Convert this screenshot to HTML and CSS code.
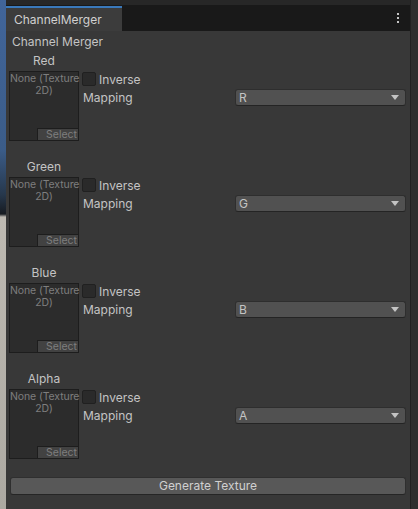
FILE: index.html
```html
<!DOCTYPE html>
<html>
<head>
<meta charset="utf-8">
<link rel="stylesheet" href="styles.css">
</head>
<body>
<div class="app">
  <div class="scene"></div>
  <div class="editor">
    <div class="topstrip"></div>
    <div class="tabbar">
      <div class="tab">ChannelMerger</div>
      <div class="menu">
        <svg width="4" height="12" viewBox="0 0 4 12"><rect x="1" y="1" width="2" height="2" fill="#c4c4c4"/><rect x="1" y="5" width="2" height="2" fill="#c4c4c4"/><rect x="1" y="9" width="2" height="2" fill="#c4c4c4"/></svg>
      </div>
    </div>
    <div class="content">
      <div class="title">Channel Merger</div>

      <div class="section">
        <div class="chan">Red</div>
        <div class="row">
          <div class="texbox">
            <div class="none">None (Texture<br>2D)</div>
            <div class="select">Select</div>
          </div>
          <div class="fields">
            <div class="inv"><span class="check"></span><span>Inverse</span></div>
            <div class="map"><span class="maplabel">Mapping</span><div class="dropdown"><span>R</span><span class="arrow"></span></div></div>
          </div>
        </div>
      </div>

      <div class="section">
        <div class="chan">Green</div>
        <div class="row">
          <div class="texbox">
            <div class="none">None (Texture<br>2D)</div>
            <div class="select">Select</div>
          </div>
          <div class="fields">
            <div class="inv"><span class="check"></span><span>Inverse</span></div>
            <div class="map"><span class="maplabel">Mapping</span><div class="dropdown"><span>G</span><span class="arrow"></span></div></div>
          </div>
        </div>
      </div>

      <div class="section">
        <div class="chan">Blue</div>
        <div class="row">
          <div class="texbox">
            <div class="none">None (Texture<br>2D)</div>
            <div class="select">Select</div>
          </div>
          <div class="fields">
            <div class="inv"><span class="check"></span><span>Inverse</span></div>
            <div class="map"><span class="maplabel">Mapping</span><div class="dropdown"><span>B</span><span class="arrow"></span></div></div>
          </div>
        </div>
      </div>

      <div class="section">
        <div class="chan">Alpha</div>
        <div class="row">
          <div class="texbox">
            <div class="none">None (Texture<br>2D)</div>
            <div class="select">Select</div>
          </div>
          <div class="fields">
            <div class="inv"><span class="check"></span><span>Inverse</span></div>
            <div class="map"><span class="maplabel">Mapping</span><div class="dropdown"><span>A</span><span class="arrow"></span></div></div>
          </div>
        </div>
      </div>

      <div class="generate">Generate Texture</div>
    </div>
  </div>
  <div class="side"></div>
</div>
</body>
</html>
```

FILE: styles.css
```css
html, body {
  margin: 0;
  padding: 0;
  height: 100%;
}
body {
  font-family: Inter, "Noto Sans", "Liberation Sans", sans-serif;
  font-size: 12px;
  color: #c4c4c4;
  background: #383838;
}
.app {
  display: flex;
  height: 509px;
  width: 418px;
}
.scene {
  width: 6px;
  flex: none;
  background: linear-gradient(#41659a 0px, #3b5c88 150px, #26374b 195px, #171b21 214px, #bdb9b1 217px, #aca9a2 509px);
}
.editor {
  width: 404px;
  flex: none;
  display: flex;
  flex-direction: column;
  background: #383838;
}
.topstrip {
  height: 5px;
  background: #272727;
}
.tabbar {
  height: 26px;
  background: #191919;
  display: flex;
  align-items: flex-start;
}
.tab {
  margin-top: 1px;
  width: 108px;
  height: 23px;
  line-height: 23px;
  padding-left: 8px;
  border-top: 2px solid #3a79bb;
  background: #3c3c3c;
  color: #d0d0d0;
}
.menu {
  margin-left: auto;
  margin-right: 10px;
  padding-top: 7px;
  display: flex;
}
.content {
  padding: 2px 4px 0 3px;
  display: flex;
  flex-direction: column;
}
.title {
  height: 18px;
  line-height: 18px;
  padding-left: 3px;
}
.section {
  display: flex;
  flex-direction: column;
  margin-bottom: 16px;
}
.chan {
  width: 70px;
  height: 18px;
  line-height: 18px;
  text-align: center;
  margin-top: 1px;
  margin-bottom: 1px;
}
.row {
  display: flex;
}
.texbox {
  width: 68px;
  height: 68px;
  border: 1px solid #1d1d1d;
  background: #2c2c2c;
  display: flex;
  flex-direction: column;
  align-items: stretch;
}
.none {
  font-size: 10.5px;
  line-height: 12px;
  color: #7e7e7e;
  text-align: center;
  padding-top: 1px;
  letter-spacing: -0.1px;
  white-space: nowrap;
}
.select {
  margin-top: auto;
  align-self: flex-end;
  width: 39px;
  height: 11px;
  border-top: 1px solid #1d1d1d;
  border-left: 1px solid #1d1d1d;
  background: #424242;
  color: #7e7e7e;
  font-size: 10.5px;
  line-height: 11px;
  text-align: right;
  padding-right: 1px;
}
.fields {
  flex: 1;
  margin-left: 3px;
  display: flex;
  flex-direction: column;
}
.inv {
  margin-top: 1px;
  display: flex;
  align-items: center;
  height: 14px;
  gap: 3px;
}
.check {
  width: 12px;
  height: 12px;
  border: 1px solid #202020;
  border-radius: 2px;
  background: #2a2a2a;
}
.map {
  margin-top: 3px;
  display: flex;
  align-items: center;
  height: 17px;
}
.maplabel {
  width: 152px;
  padding-left: 1px;
  flex: none;
}
.dropdown {
  flex: 1;
  height: 15px;
  border: 1px solid #2e2e2e;
  border-bottom-color: #242424;
  border-radius: 3px;
  background: #515151;
  display: flex;
  align-items: center;
  padding: 0 6px 0 3px;
  line-height: 15px;
}
.arrow {
  margin-left: auto;
  width: 0;
  height: 0;
  border-left: 4px solid transparent;
  border-right: 4px solid transparent;
  border-top: 5px solid #c4c4c4;
}
.generate {
  margin-top: 2px;
  margin-left: 1px;
  height: 16px;
  line-height: 16px;
  border: 1px solid #2f2f2f;
  border-bottom-color: #252525;
  border-radius: 3px;
  background: #585858;
  text-align: center;
  color: #d0d0d0;
}
.side {
  width: 7px;
  flex: none;
  border-left: 1px solid #222222;
  background: #2f2f2f;
}
```
